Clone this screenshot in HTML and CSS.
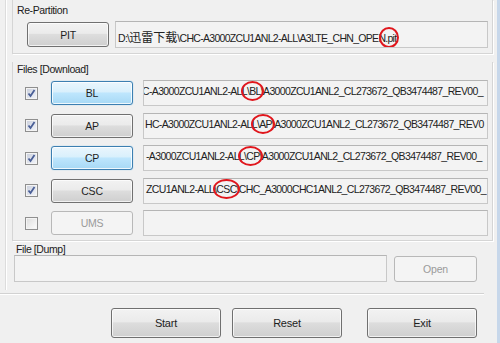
FILE: index.html
```html
<!DOCTYPE html>
<html lang="zh">

<head>
    <meta charset="UTF-8">
    <title>Odin</title>
<link rel="stylesheet" href="styles.css">
</head>

<body>
    <div class="window">
        <div class="panel">
            <!-- Re-Partition -->
            <div class="group group-pit">
                <div class="group-title">Re-Partition</div>
                <div class="pit-row">
                    <button class="btn btn-pit">PIT</button>
                    <div class="field field-pit">D:\<span class="cjk">迅雷下载</span>\CHC-A3000ZCU1ANL2-ALL\A3LTE_CHN_OPE<span class="mark mark-pit">N.pit</span></div>
                </div>
            </div>

            <!-- Files [Download] -->
            <div class="group group-files">
                <div class="group-title">Files [Download]</div>
                <div class="file-rows">
                    <div class="file-row">
                        <span class="check checked"></span>
                        <button class="btn btn-file btn-focus">BL</button>
                        <div class="field field-file"><span class="scroll s-bl">C-A3000ZCU1ANL2-AL<span class="mark">L\BL\</span>A3000ZCU1ANL2_CL273672_QB3474487_REV00_</span></div>
                    </div>
                    <div class="file-row">
                        <span class="check checked"></span>
                        <button class="btn btn-file">AP</button>
                        <div class="field field-file"><span class="scroll s-ap">HC-A3000ZCU1ANL2-AL<span class="mark">L\AP\</span>A3000ZCU1ANL2_CL273672_QB3474487_REV0</span></div>
                    </div>
                    <div class="file-row">
                        <span class="check checked"></span>
                        <button class="btn btn-file btn-focus">CP</button>
                        <div class="field field-file"><span class="scroll s-cp">-A3000ZCU1ANL2-AL<span class="mark">L\CP\</span>A3000ZCU1ANL2_CL273672_QB3474487_REV00_</span></div>
                    </div>
                    <div class="file-row">
                        <span class="check checked"></span>
                        <button class="btn btn-file">CSC</button>
                        <div class="field field-file"><span class="scroll s-csc">ZCU1ANL2-ALL<span class="mark">\CSC\</span>CHC_A3000CHC1ANL2_CL273672_QB3474487_REV00_</span></div>
                    </div>
                    <div class="file-row">
                        <span class="check"></span>
                        <button class="btn btn-file" disabled>UMS</button>
                        <div class="field field-file"></div>
                    </div>
                </div>
            </div>

            <!-- File [Dump] -->
            <div class="group group-dump">
                <div class="group-title">File [Dump]</div>
                <div class="dump-row">
                    <div class="field field-dump"></div>
                    <button class="btn btn-open" disabled>Open</button>
                </div>
            </div>
        </div>

        <div class="separator"></div>

        <div class="actions">
            <button class="btn btn-action">Start</button>
            <button class="btn btn-action btn-reset">Reset</button>
            <button class="btn btn-action btn-exit">Exit</button>
        </div>
    </div>
</body>

</html>
```

FILE: styles.css
```css
* {
    margin: 0;
    padding: 0;
    box-sizing: border-box;
}

body {
    font-family: "Liberation Sans", "Noto Sans CJK SC", Arial, sans-serif;
    font-size: 10.5px;
    letter-spacing: -0.4px;
    color: #1e1e1e;
    background-color: #f0f0f0;
}

.window {
    width: 500px;
    height: 343px;
    overflow: hidden;
    background-color: #f0f0f0;
    border-right: 3px solid #c7d7ea;
}

/* 左侧面板 */
.panel {
    margin-left: 5px;
    height: 290px;
    padding-left: 6px;
    border-left: 1px solid #dcdcdc;
    box-shadow: inset 1px 0 #fff;
}

.group {
    width: 481px;
    border: 1px solid #d5d5d5;
    border-top: 0;
    box-shadow: 1px 1px #fff;
}

.group-title {
    height: 14px;
    line-height: 14px;
    padding-left: 4px;
    color: #202020;
}

.group-pit {
    height: 54px;
    padding-top: 3px;
}

.pit-row {
    display: flex;
    align-items: center;
    gap: 6px;
    margin-top: 4px;
    padding-left: 14px;
}

.group-files {
    margin-top: 8px;
    height: 179px;
}

.file-rows {
    display: grid;
    grid-template-rows: repeat(5, 26px);
    row-gap: 6.5px;
    margin-top: 4px;
}

.file-row {
    display: flex;
    align-items: center;
    padding-left: 12px;
}

.group-dump {
    height: 47px;
    border: 0;
    box-shadow: none;
    padding-top: 1px;
}

.dump-row {
    display: flex;
    align-items: center;
    gap: 7px;
    margin-top: -1px;
    padding-left: 2px;
}

/* 按钮 */
.btn {
    font-family: inherit;
    font-size: 10.5px;
    letter-spacing: -0.2px;
    color: #1e1e1e;
    border: 1px solid #707070;
    border-radius: 3px;
    background: linear-gradient(#f2f2f2 0%, #ebebeb 45%, #dddddd 50%, #cfcfcf 100%);
    box-shadow: inset 0 0 0 1px rgba(255, 255, 255, 0.7);
    cursor: pointer;
}

.btn-focus {
    border-color: #3c7fb1;
    background: linear-gradient(#eaf6fd 0%, #d9f0fc 45%, #bee6fd 50%, #a7d9f5 100%);
    box-shadow: inset 0 0 0 1px rgba(255, 255, 255, 0.8), 0 0 1px #5bb4e8;
}

.btn:disabled {
    color: #9a9a9a;
    border-color: #b8b8b8;
    background: #f4f4f4;
    box-shadow: none;
}

.btn-pit {
    width: 82px;
    height: 25px;
    flex-shrink: 0;
}

.btn-file {
    width: 82px;
    height: 24px;
    margin-left: 13px;
    flex-shrink: 0;
}

.btn-open {
    width: 83px;
    height: 26px;
    flex-shrink: 0;
}

.btn-action {
    width: 110px;
    height: 30px;
    font-size: 11px;
}

/* 输入框 */
.field {
    height: 27px;
    border: 1px solid #c8c8c8;
    border-top-color: #b5b5b5;
    background-color: #f3f3f3;
    white-space: nowrap;
    overflow: hidden;
    color: #222;
}

.field-pit {
    width: 373px;
    padding: 6px 2px;
    letter-spacing: -0.7px;
}

.cjk {
    font-size: 12px;
    letter-spacing: 0;
}

.field-file {
    width: 345px;
    height: 26px;
    margin-left: 10px;
    padding: 4px 2px;
    letter-spacing: -0.65px;
}

.field-dump {
    width: 373px;
    height: 27px;
}

.scroll {
    display: inline-block;
}

.s-bl {
    margin-left: -4px;
}

.s-ap {
    margin-left: -1px;
}

/* 红圈标注 */
.mark {
    position: relative;
}

.mark::after {
    content: "";
    position: absolute;
    left: -1px;
    right: -1px;
    top: -4px;
    bottom: -4px;
    border: 2px solid #e0161c;
    border-radius: 50%;
}

.mark-pit::after {
    left: 1px;
    right: -3px;
    top: -5px;
    bottom: -4px;
}

/* 复选框 */
.check {
    width: 13px;
    height: 13px;
    flex-shrink: 0;
    border: 1px solid #8f8f8f;
    background: linear-gradient(135deg, #dcdcdc, #fdfdfd);
    box-shadow: inset 0 0 0 1px #f4f4f4;
}

.check.checked {
    background:
        url("data:image/svg+xml;utf8,<svg xmlns='http://www.w3.org/2000/svg' width='11' height='11'><path d='M2.5 5.5 L4.5 8 L8.5 2' fill='none' stroke='%234a5f97' stroke-width='1.8'/></svg>") center / 11px 11px no-repeat,
        linear-gradient(135deg, #c9cedb, #f4f6fb);
}

/* 分隔线 */
.separator {
    width: 484px;
    margin-top: 3px;
    border-top: 1px solid #d2d2d2;
    border-bottom: 1px solid #fff;
}

.actions {
    display: flex;
    padding-left: 111px;
    margin-top: 13px;
}

.btn-reset {
    margin-left: 11px;
}

.btn-exit {
    margin-left: 25px;
}
```
